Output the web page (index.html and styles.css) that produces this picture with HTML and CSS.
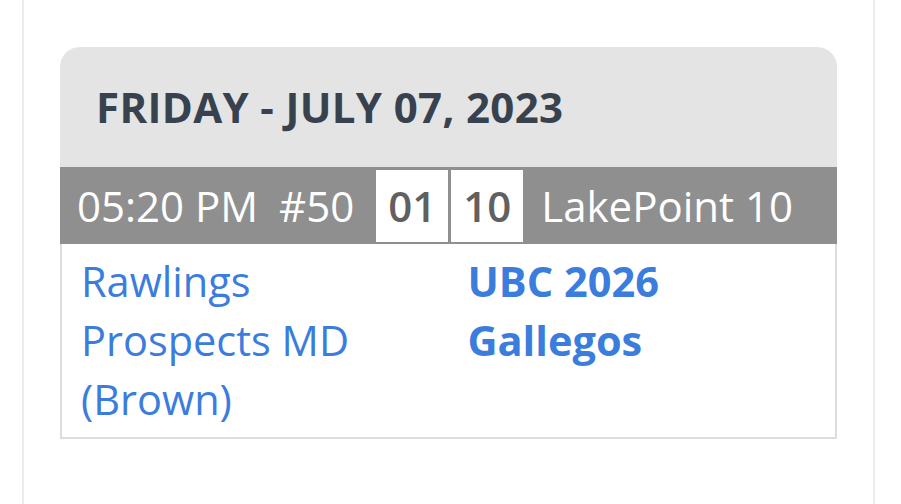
FILE: index.html
```html
<!DOCTYPE html>
<html lang="en">
<head>
<meta charset="utf-8">
<title>Schedule</title>
<link rel="stylesheet" href="styles.css">
</head>
<body>
<div class="page">
  <div class="card">
    <div class="card-head">
      <h3 class="date">FRIDAY - JULY 07, 2023</h3>
    </div>
    <div class="game-bar">
      <span class="time">05:20 PM</span>
      <span class="game-no">#50</span>
      <div class="boxes">
        <span class="box">01</span>
        <span class="box">10</span>
      </div>
      <span class="venue">LakePoint 10</span>
    </div>
    <div class="teams">
      <div class="team team-away"><a href="#">Rawlings Prospects MD (Brown)</a></div>
      <div class="team team-home"><a href="#">UBC 2026 Gallegos</a></div>
    </div>
  </div>
</div>
</body>
</html>
```
FILE: styles.css
```css
* { box-sizing: border-box; }
html, body { margin: 0; padding: 0; background: #ffffff; }
body { font-family: "Open Sans", "Noto Sans", sans-serif; }

.page {
  margin-left: 22px;
  width: 853px;
  height: 504px;
  border-left: 2px solid #ececec;
  border-right: 2px solid #ececec;
  padding: 47px 36px 0 36px;
  background: #ffffff;
}

.card {
  width: 777px;
}

.card-head {
  background: #e4e4e4;
  border-radius: 20px 20px 0 0;
  height: 120px;
  display: flex;
  align-items: center;
  padding-left: 36px;
}

.date {
  margin: 0;
  font-size: 42px;
  font-weight: 700;
  color: #37424e;
  line-height: 1.1;
  letter-spacing: 0.35px;
}

.game-bar {
  background: #8f8f8f;
  height: 77px;
  display: flex;
  align-items: center;
  padding: 3px 0 2px 17px;
  color: #ffffff;
  font-size: 42px;
  line-height: 1;
}

.game-no { margin-left: 21px; }

.boxes {
  display: flex;
  gap: 3px;
  margin-left: 22px;
  height: 72px;
}

.box {
  width: 72px;
  height: 72px;
  background: #ffffff;
  color: #606060;
  font-weight: 600;
  display: flex;
  align-items: center;
  justify-content: center;
}

.venue { margin-left: 18px; }

.teams {
  display: flex;
  border: 2px solid #dddddd;
  border-top: 0;
  padding: 8px 0 8px 0;
}

.team {
  width: 50%;
  padding: 0 18px 0 19px;
  font-size: 41.5px;
  line-height: 59px;
}

.team a {
  color: #3b7ddd;
  text-decoration: none;
}

.team-home a { font-weight: 700; }
```
